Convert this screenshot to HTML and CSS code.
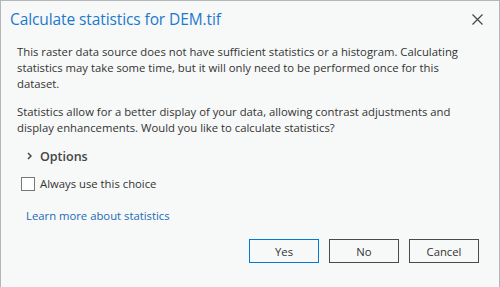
FILE: index.html
```html
<!DOCTYPE html>
<html>
<head>
	<meta charset="utf-8">
	<title>Calculate statistics</title>
	<link rel="stylesheet" href="styles.css">
</head>
<body>
<div class="dlg">
	<div class="head">
		<h1>Calculate statistics for DEM.tif</h1>
		<span class="close">
			<svg width="11" height="11" viewBox="0 0 11 11"><path d="M0.5 0.5L10.5 10.5M10.5 0.5L0.5 10.5" stroke="#444" stroke-width="1.2" fill="none"/></svg>
		</span>
	</div>
	<div class="body">
		<p>This raster data source does not have sufficient statistics or a histogram. Calculating statistics may take some time, but it will only need to be performed once for this dataset.</p>
		<p>Statistics allow for a better display of your data, allowing contrast adjustments and display enhancements. Would you like to calculate statistics?</p>
		<div class="opts">
			<svg width="5" height="8" viewBox="0 0 5 8"><path d="M1 1L4 4L1 7" stroke="#444" stroke-width="1.5" fill="none"/></svg>
			<span>Options</span>
		</div>
		<label class="chk"><span class="box"></span>Always use this choice</label>
		<a class="link" href="#">Learn more about statistics</a>
	</div>
	<div class="btns">
		<button class="btn def">Yes</button>
		<button class="btn">No</button>
		<button class="btn">Cancel</button>
	</div>
</div>
</body>
</html>
```

FILE: styles.css
```css
html, body{
	margin: 0;
	padding: 0;
}
body{
	width: 500px;
	height: 287px;
	overflow: hidden;
	background: #f7f8f8;
	font-family: "Open Sans", "Noto Sans", sans-serif;
	color: #333;
}
.dlg{
	box-sizing: border-box;
	height: 287px;
	border: 1px solid #b4b6b8;
	border-bottom: none;
	background: #f7f8f8;
}
.head{
	display: flex;
	justify-content: space-between;
	align-items: center;
	padding: 4px 16px 0 9px;
	height: 27px;
}
h1{
	margin: 0;
	font-size: 15.5px;
	font-weight: 400;
	color: #1b78cf;
	letter-spacing: -0.1px;
}
.close{
	display: flex;
	margin-top: 2px;
}
.body{
	padding: 12px 30px 0 16px;
	font-size: 11.3px;
}
p{
	margin: 0 0 12px 0;
	line-height: 16px;
}
.opts{
	display: flex;
	align-items: center;
	gap: 8px;
	padding-left: 10px;
	height: 20px;
	margin-top: -2px;
	font-size: 12.5px;
	font-weight: 600;
	color: #444;
}
.chk{
	display: flex;
	align-items: center;
	gap: 5px;
	margin-top: 10px;
	padding-left: 4px;
	font-size: 11.3px;
}
.box{
	box-sizing: border-box;
	width: 14px;
	height: 14px;
	border: 1px solid #777;
	background: #fff;
}
.link{
	display: block;
	margin-top: 17px;
	padding-left: 9px;
	font-size: 11.3px;
	color: #1a6bb5;
	text-decoration: none;
}
.btns{
	display: flex;
	justify-content: flex-end;
	gap: 10px;
	padding: 16px 20px 0 0;
}
.btn{
	box-sizing: border-box;
	width: 70px;
	height: 24px;
	background: #f7f8f8;
	border: 1px solid #4a4a4a;
	font-family: "Open Sans", "Noto Sans", sans-serif;
	font-size: 11.3px;
	color: #333;
	padding: 0;
}
.btn.def{
	border-color: #0078d7;
}
```
